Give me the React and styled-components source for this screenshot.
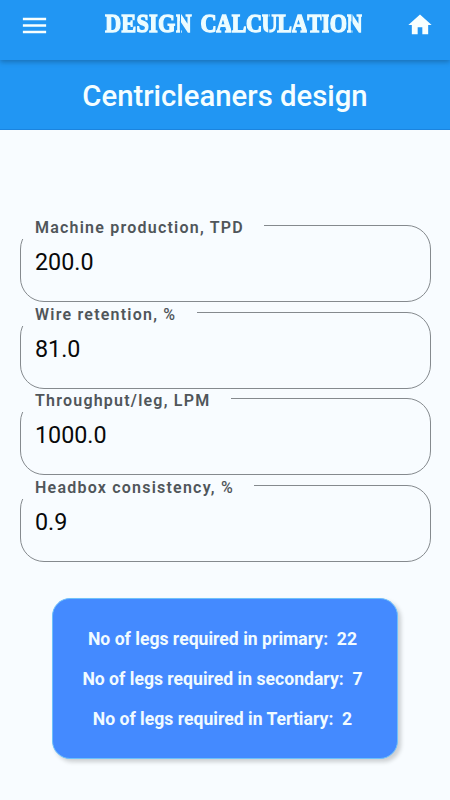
import React from "react";
import styled, { createGlobalStyle } from "styled-components";

const GlobalStyle = createGlobalStyle`
  * {
    box-sizing: border-box;
  }
  body {
    margin: 0;
    background: #f8fcff;
    font-family: Roboto, sans-serif;
  }
`;

const Screen = styled.div`
  width: 100%;
  height: 800px;
  overflow: hidden;
`;

const AppBar = styled.header`
  position: relative;
  z-index: 1;
  display: flex;
  align-items: flex-start;
  justify-content: space-between;
  height: 60px;
  padding: 10px 16px 0 19px;
  background: #2196f3;
  box-shadow: 0 2px 5px rgba(0, 0, 0, 0.25);
`;

const Icon = styled.svg`
  display: block;
  width: ${props => props.$size}px;
  height: ${props => props.$size}px;
  margin-top: ${props => props.$top || 0}px;
  fill: #f8fffe;
`;

const Logo = styled.h1`
  display: flex;
  gap: 10px;
  width: 257px;
  margin: 0 0 0 11px;
  font: bold 26px/27px "Liberation Serif", serif;
  transform: scaleX(0.86);
  transform-origin: left;
`;

const Word = styled.span`
  display: flex;
  letter-spacing: ${props => props.$spacing}px;
`;

const Letter = styled.span`
  -webkit-text-stroke: 1.5px transparent;
  color: transparent;
  background: ${props =>
    props.$cut
      ? `linear-gradient(90deg, #ecfcff calc(${props.$cut}% - 0.5px), #2196f3 calc(${props.$cut}% - 0.5px), #2196f3 calc(${props.$cut}% + 0.5px), #ecfcff calc(${props.$cut}% + 0.5px))`
      : "#ecfcff"};
  -webkit-background-clip: text;
  background-clip: text;
`;

const Heading = styled.h2`
  height: 70px;
  margin: 0;
  background: #2196f3;
  border-bottom: 1px solid #1b84df;
  color: #f5feff;
  font-size: 29.3px;
  font-weight: 500;
  line-height: 73px;
  text-align: center;
`;

const Form = styled.div`
  display: grid;
  grid-template-rows: repeat(4, 77px);
  row-gap: 9.5px;
  padding: 95px 19.5px 0 20px;
`;

const Field = styled.div`
  position: relative;
  padding: 20px 14px;
  border: 1px solid #858a8e;
  border-radius: 24px;
`;

const Label = styled.label`
  position: absolute;
  top: -8px;
  left: -2px;
  width: ${props => props.$width}px;
  height: 21px;
  padding-left: 16px;
  background: linear-gradient(transparent 5px, #f8fcff 5px);
  color: #50565a;
  font-size: 16px;
  font-weight: 600;
  line-height: 19px;
  letter-spacing: 1.22px;
  white-space: nowrap;
`;

const Percent = styled.span`
  font-weight: 500;
`;

const Value = styled.div`
  color: #08090a;
  font-size: 23.3px;
  line-height: 32px;
`;

const Results = styled.section`
  display: flex;
  flex-direction: column;
  justify-content: center;
  width: 346px;
  height: 161px;
  margin: 36.4px 0 0 52px;
  padding: 1px 5px 0 0;
  border: 1px solid #6ec1fb;
  border-radius: 18px;
  background: #448aff;
  box-shadow: 3px 3px 4px rgba(0, 0, 0, 0.18);
`;

const Result = styled.p`
  margin: 0;
  color: #f1fbff;
  font-size: 17.6px;
  font-weight: 700;
  line-height: 40px;
  text-align: center;
  white-space: pre;
`;

// where the stencil bridge crosses each letter, in % of its width
const cuts = { D: 43, G: 50, C: 50, O: 50, N: 32, U: 48 };

const words = [
  { text: "DESIGN", spacing: 0.2 },
  { text: "CALCULATION", spacing: -0.65 }
];

const fields = [
  { label: "Machine production, TPD", value: "200.0", width: 245 },
  { label: "Wire retention, ", percent: true, value: "81.0", width: 178 },
  { label: "Throughput/leg, LPM", value: "1000.0", width: 212 },
  { label: "Headbox consistency, ", percent: true, value: "0.9", width: 235 }
];

const results = [
  { name: "primary", legs: 22 },
  { name: "secondary", legs: 7 },
  { name: "Tertiary", legs: 2 }
];

const App = () => (
  <>
    <GlobalStyle />
    <Screen>
      <AppBar>
        <Icon $size={31} viewBox="0 0 24 24">
          <path d="M3 18h18v-2H3v2zm0-5h18v-2H3v2zm0-7v2h18V6H3z" />
        </Icon>
        <Logo>
          {words.map(word => (
            <Word key={word.text} $spacing={word.spacing}>
              {word.text.split("").map((letter, index) => (
                <Letter key={index} $cut={cuts[letter]}>
                  {letter}
                </Letter>
              ))}
            </Word>
          ))}
        </Logo>
        <Icon $size={28} $top={1} viewBox="0 0 24 24">
          <path d="M10 20v-6h4v6h5v-8h3L12 3 2 12h3v8z" />
        </Icon>
      </AppBar>
      <Heading>Centricleaners design</Heading>
      <Form>
        {fields.map(field => (
          <Field key={field.label}>
            <Label $width={field.width}>
              {field.label}
              {field.percent && <Percent>%</Percent>}
            </Label>
            <Value>{field.value}</Value>
          </Field>
        ))}
      </Form>
      <Results>
        {results.map(result => (
          <Result key={result.name}>
            {`No of legs required in ${result.name}:  ${result.legs}`}
          </Result>
        ))}
      </Results>
    </Screen>
  </>
);

export default App;
